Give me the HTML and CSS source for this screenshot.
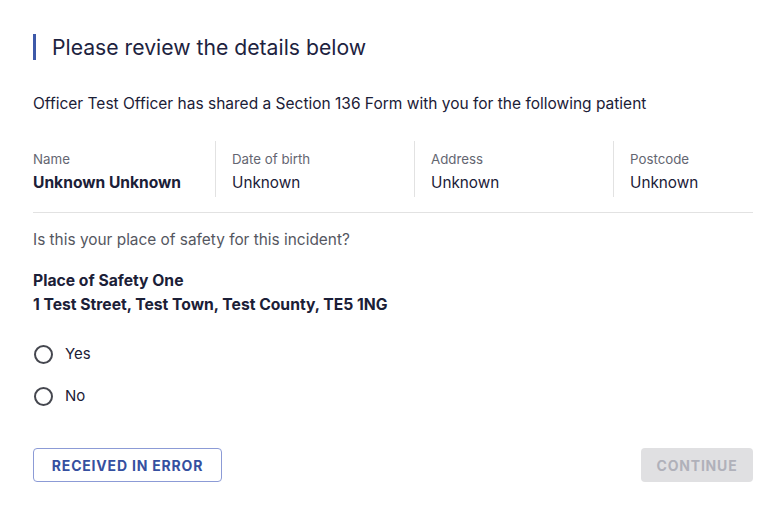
FILE: index.html
```html
<!DOCTYPE html>
<html>
<head>
  <meta charset="UTF-8">
  <title>Section 136 Form</title>
  <link rel="stylesheet" href="styles.css">
</head>
<body>
  <div class="page">
    <h1 class="title">Please review the details below</h1>

    <p class="intro">Officer Test Officer has shared a Section 136 Form with you for the following patient</p>

    <div class="patient">
      <div class="field">
        <div class="label">Name</div>
        <div class="value strong">Unknown Unknown</div>
      </div>
      <div class="field">
        <div class="label">Date of birth</div>
        <div class="value">Unknown</div>
      </div>
      <div class="field">
        <div class="label">Address</div>
        <div class="value">Unknown</div>
      </div>
      <div class="field">
        <div class="label">Postcode</div>
        <div class="value">Unknown</div>
      </div>
    </div>

    <p class="question">Is this your place of safety for this incident?</p>

    <div class="place">
      <div>Place of Safety One</div>
      <div>1 Test Street, Test Town, Test County, TE5 1NG</div>
    </div>

    <div class="options">
      <label class="radio"><span class="circle"></span>Yes</label>
      <label class="radio"><span class="circle"></span>No</label>
    </div>

    <div class="actions">
      <button class="btn-outline">Received in error</button>
      <button class="btn-primary" disabled>Continue</button>
    </div>
  </div>
</body>
</html>
```

FILE: styles.css
```css
body {
  font-family: Inter, "Noto Sans", sans-serif;
  margin: 0;
  color: #1b2037;
  background-color: #fff;
}

.page {
  padding: 34px 31px 0 33px;
}

.title {
  margin: 0;
  border-left: 3px solid #3d59a9;
  padding-left: 16px;
  font-size: 21.2px;
  font-weight: 400;
  line-height: 26px;
  color: #1d2340;
}

.intro {
  margin: 34px 0 0;
  font-size: 15.5px;
  line-height: 20px;
}

.patient {
  display: grid;
  grid-template-columns: 182px 199px 199px 1fr;
  margin-top: 27px;
  padding-bottom: 15px;
  border-bottom: 1px solid #e2e2e2;
}

.field {
  border-left: 1px solid #e2e2e2;
  padding-left: 16px;
  min-height: 56px;
}

.field:first-child {
  border-left: none;
  padding-left: 0;
}

.label {
  font-size: 13.3px;
  color: #646671;
  line-height: 18px;
  margin-top: 9px;
}

.value {
  font-size: 15.3px;
  line-height: 22px;
  margin-top: 4px;
}

.strong {
  font-size: 15.6px;
  font-weight: 700;
}

.question {
  margin: 16px 0 0;
  font-size: 15.4px;
  line-height: 22px;
  color: #55575f;
}

.place {
  margin-top: 18px;
  font-size: 15.7px;
  font-weight: 700;
  line-height: 24px;
}

.options {
  margin-top: 26px;
  display: flex;
  flex-direction: column;
  gap: 20px;
}

.radio {
  display: flex;
  align-items: center;
  gap: 12px;
  font-size: 15px;
  line-height: 22px;
}

.circle {
  width: 15px;
  height: 15px;
  border: 2px solid #45474f;
  border-radius: 50%;
  margin-left: 1px;
}

.actions {
  display: flex;
  justify-content: space-between;
  margin-top: 41px;
}

button {
  font-family: inherit;
  font-size: 14px;
  font-weight: 700;
  letter-spacing: 0.8px;
  text-transform: uppercase;
  height: 34px;
  border-radius: 4px;
  padding: 0 12px;
}

.btn-outline {
  background-color: #fff;
  border: 1px solid #8c9bd6;
  color: #3550a0;
  width: 189px;
}

.btn-primary {
  background-color: #e0e0e2;
  border: none;
  color: #b0b1ba;
  width: 112px;
}
```
